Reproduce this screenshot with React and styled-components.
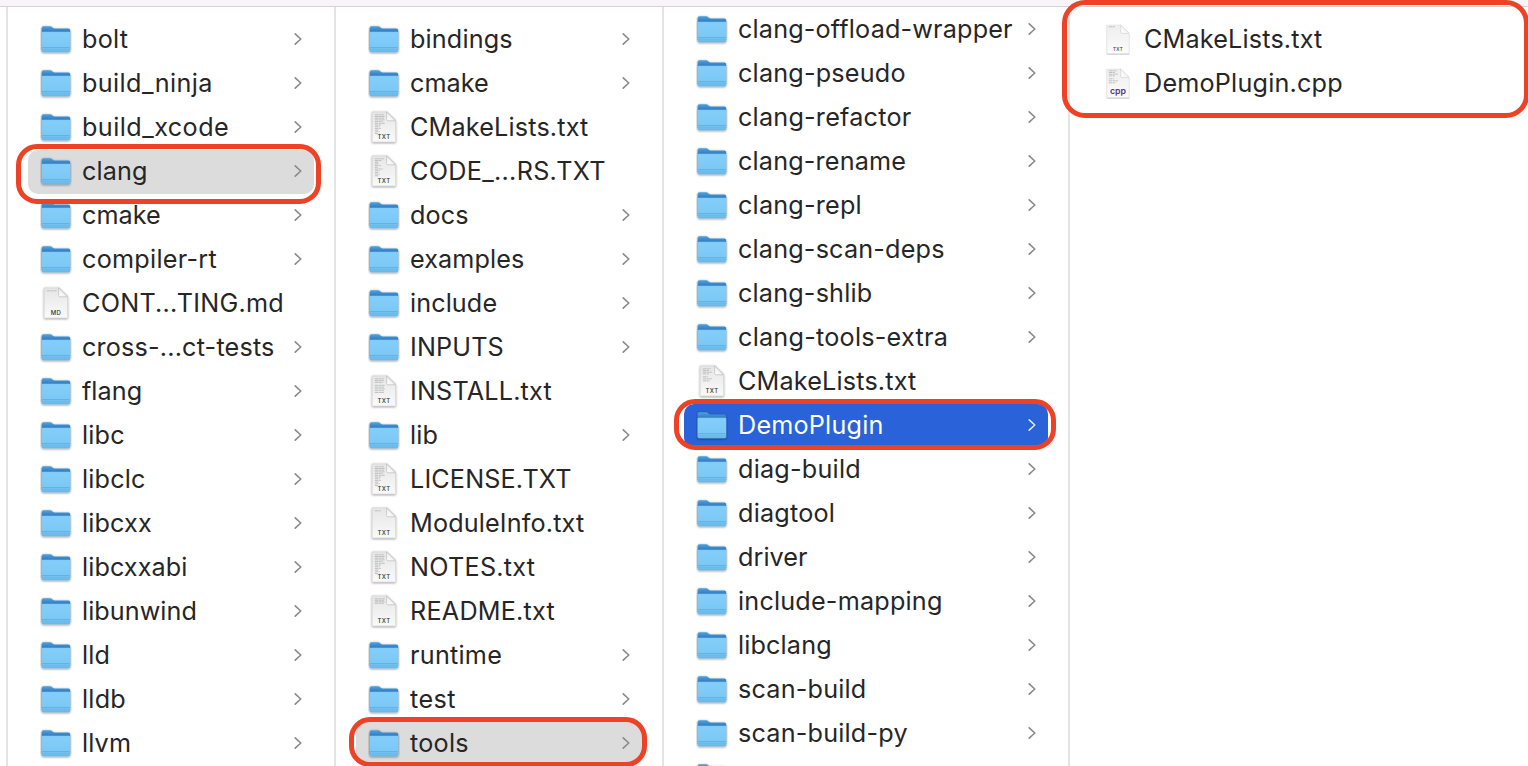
import React from 'react';
import styled, { createGlobalStyle, css } from 'styled-components';

const GlobalStyle = createGlobalStyle`
  * { box-sizing: border-box; }
  html, body { margin: 0; padding: 0; background: #fff; overflow: hidden; }
`;

const Window = styled.div`
  position: relative;
  display: flex;
  flex-direction: column;
  width: 1528px;
  height: 766px;
  overflow: hidden;
  background: #fff;
  color: #262626;
  font-family: Inter, 'Liberation Sans', sans-serif;
  font-size: 25.2px;
`;

const Toolbar = styled.div`
  flex: none;
  height: 7px;
  background: #f9f4f8;
  border-bottom: 1px solid #d6d2d4;
`;

const Browser = styled.main`
  flex: 1;
  min-height: 0;
  display: flex;
  padding-left: 6px;
`;

const Column = styled.ul`
  flex: none;
  width: ${(p) => p.$width}px;
  margin: 0;
  padding: ${(p) => p.$top}px 20px 0;
  list-style: none;
  border-left: 2px solid #e4e4e4;
`;

const Row = styled.li`
  position: relative;
  display: flex;
  align-items: center;
  height: 44px;
  padding: 0 10.5px 0 12px;
  border-radius: 10px;
  ${(p) => p.$state === 'open' && css`background: #dcdcdc;`}
  ${(p) => p.$state === 'active' && css`background: #2962d9; color: #fff;`}
`;

const IconSlot = styled.span`
  flex: none;
  display: flex;
  width: 32px;
  height: 36px;
  margin-right: 10px;
`;

const Name = styled.span`
  flex: 1;
  white-space: nowrap;
  line-height: 44px;
  letter-spacing: ${(p) => p.$tracking}px;
  margin-top: -2px;
`;

const Chevron = styled.svg`
  flex: none;
  width: 12px;
  height: 16px;
  margin-bottom: 2px;
  fill: none;
  stroke: ${(p) => (p.$light ? '#dfe8fb' : '#8a8a8a')};
  stroke-width: 1.6;
  stroke-linecap: round;
  stroke-linejoin: round;
`;

const Outline = styled.div`
  position: absolute;
  z-index: 2;
  top: ${(p) => p.$inset[0]}px;
  right: ${(p) => p.$inset[1]}px;
  bottom: ${(p) => p.$inset[2]}px;
  left: ${(p) => p.$inset[3]}px;
  border: 5px solid #ee4227;
  border-radius: ${(p) => p.$radius || 21}px;
  pointer-events: none;
`;

const Definitions = styled.svg`
  position: absolute;
  width: 0;
  height: 0;
`;

function Gradients() {
  return (
    <Definitions aria-hidden="true">
      <defs>
        <linearGradient id="folderBack" x1="0" y1="0" x2="0" y2="1">
          <stop offset="0" stopColor="#4fa3dc" />
          <stop offset="0.2" stopColor="#3580c4" />
          <stop offset="1" stopColor="#3580c4" />
        </linearGradient>
        <linearGradient id="folderFront" x1="0" y1="0" x2="0" y2="1">
          <stop offset="0" stopColor="#7dcbf8" />
          <stop offset="0.1" stopColor="#83cdf8" />
          <stop offset="0.75" stopColor="#7cc8f5" />
          <stop offset="1" stopColor="#68b6e6" />
        </linearGradient>
        <linearGradient id="paper" x1="0" y1="0" x2="0" y2="1">
          <stop offset="0" stopColor="#e6e6e6" />
          <stop offset="1" stopColor="#fafafa" />
        </linearGradient>
        <linearGradient id="paperFold" x1="0" y1="1" x2="1" y2="0">
          <stop offset="0" stopColor="#ffffff" />
          <stop offset="1" stopColor="#e2e2e2" />
        </linearGradient>
        <filter id="iconShadow" x="-20%" y="-20%" width="140%" height="150%">
          <feDropShadow dx="0" dy="0.7" stdDeviation="0.8" floodColor="#000" floodOpacity="0.5" />
        </filter>
      </defs>
    </Definitions>
  );
}

function FolderIcon() {
  return (
    <svg width="32" height="36" viewBox="0 0 32 36">
      <g filter="url(#iconShadow)">
        <path d="M1.6 6Q1.6 4.2 3.4 4.2H10.2Q11.3 4.2 12 5L12.8 5.8Q13.5 6.6 14.5 6.6H28.4Q30.2 6.6 30.2 8.4V28H1.6Z" fill="url(#folderBack)" />
        <path d="M1.6 10.8Q1.6 9.8 2.6 9.8H29.2Q30.2 9.8 30.2 10.8V28.8Q30.2 30.2 28.8 30.2H3Q1.6 30.2 1.6 28.8Z" fill="url(#folderFront)" />
      </g>
      <path d="M2 25.4H29.8" stroke="#4b9fd6" strokeWidth="0.8" opacity="0.7" />
      <path d="M2 27.3H29.8" stroke="#58a9dc" strokeWidth="0.7" opacity="0.5" />
    </svg>
  );
}

const LINES = {
  none: [],
  title: [[0, 10]],
  short: [[0, 6]],
  few: [[0, 10], [1.5, 9], [3, 10], [4.5, 9]],
  code: [[0, 8], [1.7, 6], [3.4, 9], [5.1, 6], [8, 5], [10, 9], [12, 7]],
  half: [[0, 9], [1.8, 9], [3.6, 8], [6.5, 10], [8.3, 9], [10.1, 10], [11.9, 9], [13.7, 9]],
  dense: [[0, 9], [1.7, 10], [3.4, 9], [5.1, 10], [6.8, 8], [8.5, 10], [10.2, 6], [11.9, 5], [13.6, 6], [15.3, 4], [17, 5], [18.7, 3]],
  narrow: [[0, 9], [1.7, 7], [3.4, 4], [5.1, 4], [6.8, 6], [8.5, 3], [10.2, 8], [11.9, 5], [13.6, 4], [15.3, 5], [17, 4]],
};

function FileIcon({ label, lines = 'none', thin }) {
  const cpp = label === 'cpp';
  return (
    <svg width="32" height="36" viewBox="0 0 32 36">
      <g filter="url(#iconShadow)" transform={thin ? 'translate(0.9 1.2) scale(0.95)' : undefined} opacity={thin ? 0.65 : 1}>
        <path d="M4.2 1.9H18.6L27.6 10.8V31.9H4.2Z" fill="url(#paper)" stroke="#c6c6c6" strokeWidth="0.4" />
        <path d="M18.6 1.9V9.3Q18.6 10.8 20.1 10.8H27.6Z" fill="url(#paperFold)" stroke="#bdbdbd" strokeWidth="0.7" />
      </g>
      <g stroke="#b4b4b4" strokeWidth="0.8" strokeDasharray="3.4 0.5 2.2 0.4">
        {LINES[lines].map(([y, w]) => (
          <path key={y} d={`M6.8 ${4.8 + y}h${w}`} />
        ))}
      </g>
      <text
        x="16"
        y={cpp ? 27.5 : 29}
        textAnchor="middle"
        fontFamily="Inter, sans-serif"
        fontSize={cpp ? 8.8 : thin ? 4.6 : 6}
        fontWeight={cpp ? 600 : 500}
        letterSpacing={cpp ? 0 : 0.4}
        fill={cpp ? '#5c2f9e' : '#333'}
      >
        {label}
      </text>
    </svg>
  );
}

const folder = (name, tracking, extra) => ({ name, kind: 'folder', tracking, ...extra });
const file = (name, tracking, label, lines, extra) => ({ name, kind: 'file', tracking, label, lines, ...extra });

const COLUMNS = [
  {
    width: 328,
    top: 11,
    items: [
      folder('bolt', 0.25),
      folder('build_ninja', 0.4),
      folder('build_xcode', 0.45),
      folder('clang', 0.15, { state: 'open', outline: [-6.5, -7, -10, -12] }),
      folder('cmake', 0.05),
      folder('compiler-rt', 0.27),
      file('CONT...TING.md', 0.25, 'MD', 'title'),
      folder('cross-...ct-tests', 0.18),
      folder('flang', 0.05),
      folder('libc', 0.2),
      folder('libclc', 0.2),
      folder('libcxx', 0.15),
      folder('libcxxabi', 0.1),
      folder('libunwind', 0.05),
      folder('lld', 0.1),
      folder('lldb', 0.25),
      folder('llvm', 0.15),
    ],
  },
  {
    width: 328,
    top: 11,
    items: [
      folder('bindings', 0.15),
      folder('cmake', 0.05),
      file('CMakeLists.txt', 0.17, 'TXT', 'dense'),
      file('CODE_...RS.TXT', 0.3, 'TXT', 'narrow'),
      folder('docs', 0.1),
      folder('examples', 0.12),
      folder('include', 0.1),
      folder('INPUTS', 0.15),
      file('INSTALL.txt', 0.18, 'TXT', 'half'),
      folder('lib', 0.2),
      file('LICENSE.TXT', 0.15, 'TXT', 'dense'),
      file('ModuleInfo.txt', 0.15, 'TXT', 'short'),
      file('NOTES.txt', 0.25, 'TXT', 'dense'),
      file('README.txt', 0.22, 'TXT', 'few'),
      folder('runtime', 0.25),
      folder('test', 0.45),
      folder('tools', 0.25, { state: 'open', outline: [-5.5, -4.5, -1, -7.5] }),
    ],
  },
  {
    width: 406,
    top: 1,
    items: [
      folder('clang-offload-wrapper', 0.17),
      folder('clang-pseudo', 0.2),
      folder('clang-refactor', 0.22),
      folder('clang-rename', 0.17),
      folder('clang-repl', 0.2),
      folder('clang-scan-deps', 0.18),
      folder('clang-shlib', 0.18),
      folder('clang-tools-extra', 0.24),
      file('CMakeLists.txt', 0.17, 'TXT', 'code'),
      folder('DemoPlugin', 0.2, { state: 'active', outline: [-5.5, -7.5, -1.5, -10] }),
      folder('diag-build', 0.23),
      folder('diagtool', 0.22),
      folder('driver', 0.05),
      folder('include-mapping', 0.2),
      folder('libclang', 0.15),
      folder('scan-build', 0.2),
      folder('scan-build-py', 0.2),
      folder('', 0),
    ],
  },
  {
    width: 460,
    top: 11,
    items: [
      file('CMakeLists.txt', 0.17, 'TXT', 'short', { thin: true }),
      file('DemoPlugin.cpp', 0.2, 'cpp', 'code', { thin: true }),
    ],
  },
];

function Entry({ item }) {
  return (
    <Row $state={item.state}>
      <IconSlot>
        {item.kind === 'folder' ? <FolderIcon /> : <FileIcon label={item.label} lines={item.lines} thin={item.thin} />}
      </IconSlot>
      <Name $tracking={item.tracking}>{item.name}</Name>
      {item.kind === 'folder' && (
        <Chevron viewBox="0 0 12 16" $light={item.state === 'active'}>
          <path d="M3.2 2.8L8.8 8L3.2 13.2" />
        </Chevron>
      )}
      {item.outline && <Outline $inset={item.outline} />}
    </Row>
  );
}

export default function App() {
  return (
    <Window>
      <GlobalStyle />
      <Gradients />
      <Toolbar />
      <Browser>
        {COLUMNS.map((column, i) => (
          <Column key={i} $width={column.width} $top={column.top}>
            {column.items.map((item) => (
              <Entry key={item.name} item={item} />
            ))}
          </Column>
        ))}
      </Browser>
      <Outline $inset={[0, -1, 648, 1062]} $radius={23} />
    </Window>
  );
}
